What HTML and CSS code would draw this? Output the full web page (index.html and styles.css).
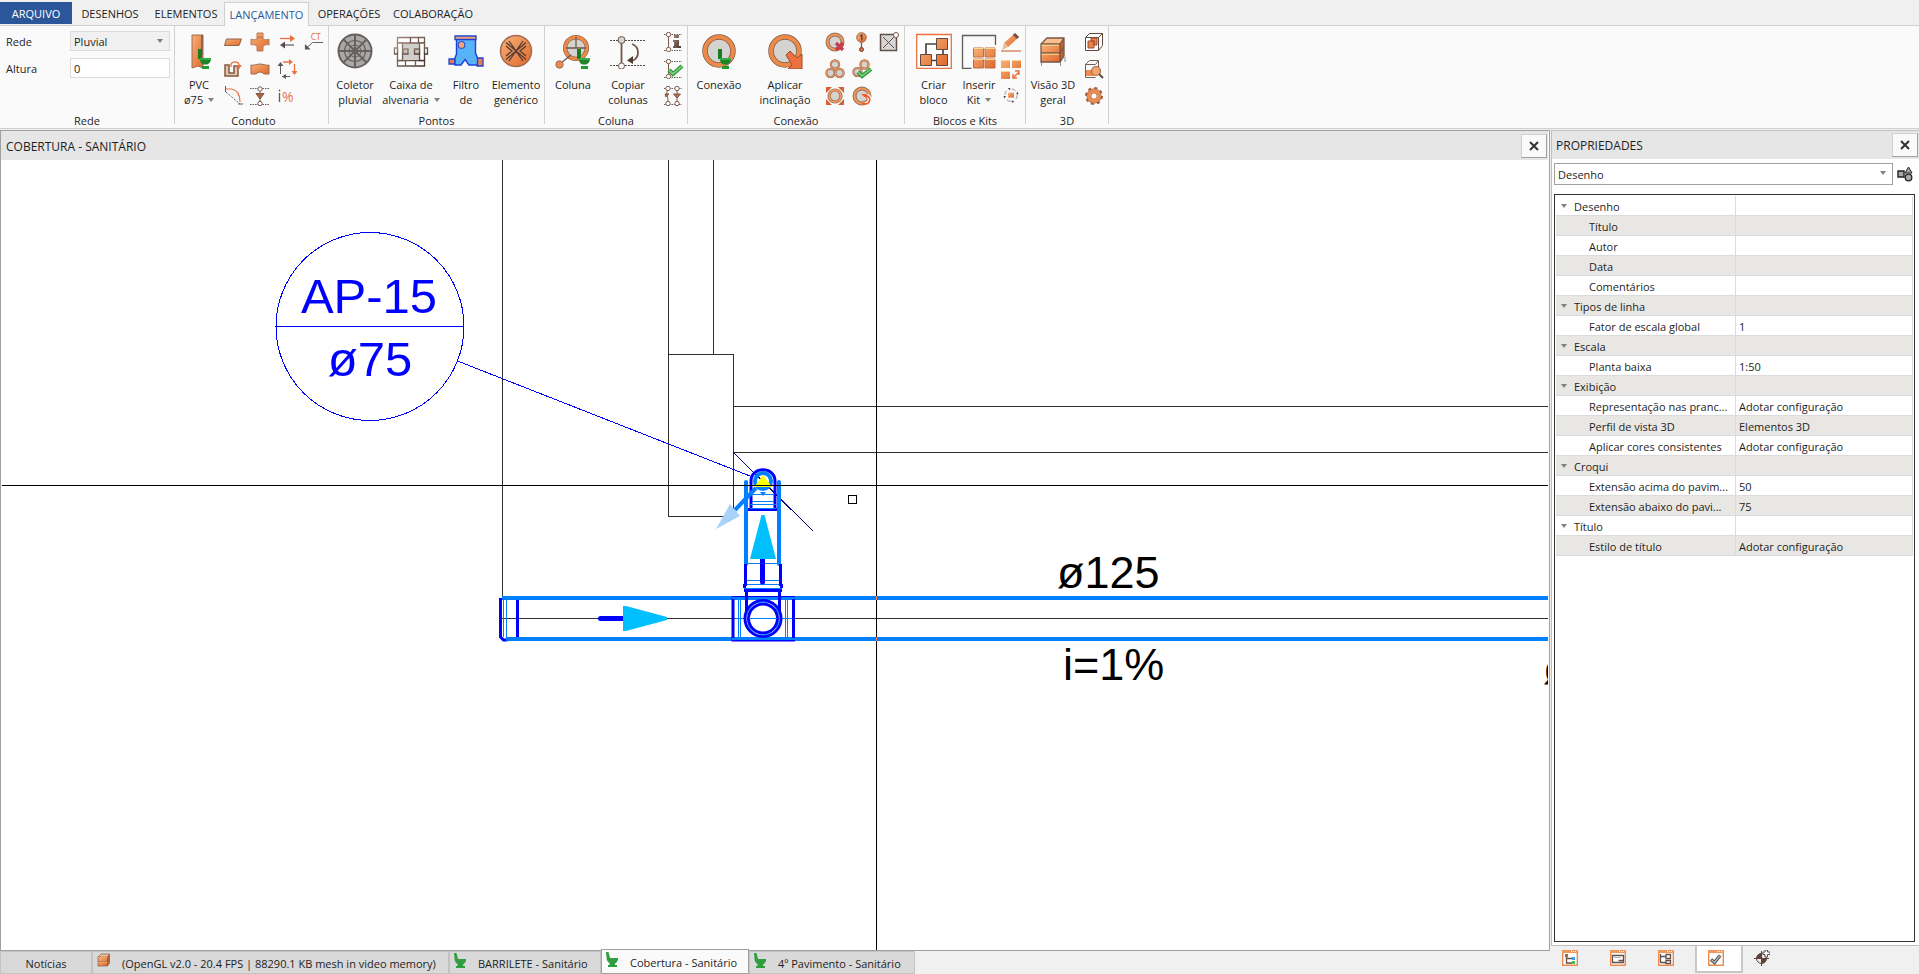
FILE: index.html
```html
<!DOCTYPE html>
<html lang="pt-BR">
<head>
<meta charset="utf-8">
<title>Cobertura - Sanitário</title>
<link rel="stylesheet" href="styles.css">
</head>
<body>
<svg class="defs" width="0" height="0" aria-hidden="true">
  <defs>
    <linearGradient id="org" x1="0" y1="0" x2="1" y2="1"><stop offset="0" stop-color="#f8b27a"/><stop offset="1" stop-color="#e0672a"/></linearGradient>
    <linearGradient id="brn" x1="0" y1="0" x2="1" y2="1"><stop offset="0" stop-color="#a08878"/><stop offset="1" stop-color="#4a3530"/></linearGradient>
    <symbol id="toilet" viewBox="0 0 14 20"><path d="M1 0h4v10H1z" fill="#1b7a22"/><path d="M2.500 9H14c0 4-2 6-4 6.500H6C4 14.500 3 12.500 2.500 9z" fill="#1f8428"/><path d="M3 9h11v2H3z" fill="#2fae45"/><path d="M5 17h7v3H5z" fill="#1f9a30"/></symbol>
    <symbol id="seat" viewBox="0 0 12 15"><path d="M0 0h2.500l1.500 6h8v2c-1 2-2 3-3 3.500V13h2v2H2v-2h1.500v-2C1.500 10 .5 8 .5 5z" fill="#2f9e3f"/></symbol>
    <symbol id="ring" viewBox="0 0 36 36"><circle cx="18" cy="18" r="14" fill="#d5d3d0" stroke="#7d5a48" stroke-width="5.500"/><circle cx="18" cy="18" r="14" fill="none" stroke="#ee8a48" stroke-width="4"/></symbol>
    <symbol id="sring" viewBox="0 0 20 20"><circle cx="10" cy="10" r="7.500" fill="#d5d3d0" stroke="#94705c" stroke-width="4"/><circle cx="10" cy="10" r="7.500" fill="none" stroke="#f0955a" stroke-width="2.200"/></symbol>
    <symbol id="cube" viewBox="0 0 28 30"><path d="M2 8l6-6h17l-4 6z" fill="#f9c08c"/><path d="M2 8h19v18H2z" fill="url(#org)"/><path d="M21 8l4-6v18l-4 6z" fill="#c4622c"/><path d="M2 8l6-6h17v18l-4 6H2zM2 8h19v18M21 8l4-6M2 17h19l4-6" fill="none" stroke="#775548" stroke-width="1.300"/><path d="M2.500 9.200H20M2.500 18.200H20" stroke="#f8e08c"/></symbol>
  </defs>
</svg>

<div class="app">
  <nav class="menu" aria-label="Menu principal">
    <button class="tab file">ARQUIVO</button>
    <button class="tab">DESENHOS</button>
    <button class="tab">ELEMENTOS</button>
    <button class="tab current">LANÇAMENTO</button>
    <button class="tab">OPERAÇÕES</button>
    <button class="tab">COLABORAÇÃO</button>
  </nav>

  <section class="ribbon" aria-label="Lançamento">
    <div class="group g-rede">
      <div class="fields">
        <label for="rede">Rede</label>
        <div class="combo"><select id="rede"><option>Pluvial</option></select></div>
        <label for="altura">Altura</label>
        <input id="altura" type="text" value="0">
      </div>
      <h2>Rede</h2>
    </div>

    <div class="group g-conduto">
      <div class="tools">
        <button class="big w40"><svg viewBox="0 0 36 36"><path d="M11 2h11v33l-5-2-6 2z" fill="url(#org)" stroke="#9c6a50"/><path d="M20 2h2v20l-2-1z" fill="#8d6552"/><use href="#toilet" x="15" y="16" width="16" height="20"/></svg><span>PVC<br>ø75 <i class="caret"></i></span></button>
        <div class="small c4">
          <button aria-label="Conduto"><svg viewBox="0 0 20 20"><path d="M3.500 7h15l-2.500 6.500H1.500z" fill="url(#org)" stroke="#8a6350"/></svg></button>
          <button aria-label="Cruzamento"><svg viewBox="0 0 20 20"><path d="M7 1h6v6c2 1 4 1 6 0v6c-2-1-4 0-6 1v5H7v-5c-2-1-4-2-6-1V7c2 1 4 1 6 0z" fill="url(#org)" stroke="#b87a58"/><path d="M7 6.500Q10 3 13 6.500" fill="none" stroke="#9c6a50"/></svg></button>
          <button aria-label="Inverter sentido"><svg viewBox="0 0 20 20"><path d="M5 13h12" stroke="#605a58" stroke-width="1.200"/><path d="M3 6.500h12" stroke="#ec7040" stroke-width="1.300"/><path d="M13 3l5 3.500-5 3.500z" fill="#ec7040"/><path d="M8 9.500v7L3 13z" fill="#5c4c48"/></svg></button>
          <button aria-label="Chamada de texto"><svg viewBox="-1 0 21 20"><path d="M19 10.500H8L1 17" fill="none" stroke="#605a58"/><path d="M0 12v6h6z" fill="#5c5552"/><text x="6" y="8" class="ct">CT</text></svg></button>
          <button aria-label="Desviar"><svg viewBox="0 0 20 20"><path d="M2 6h4v8h5V7h4v10H2z" fill="#ecc6aa" stroke="#7e5a49" stroke-width="1.500"/><path d="M8 8V5.500C9 2 15 2 16 5.500V8" fill="none" stroke="#ec7040" stroke-width="1.300"/><path d="M13 6h6l-3 4z" fill="#ec7040"/></svg></button>
          <button aria-label="Curva"><svg viewBox="0 0 20 20"><path d="M1 6c3 1 5-1 9-1s6 2 9 1v9h-5q-4-4-8 0H1z" fill="url(#org)" stroke="#9c6a50"/></svg></button>
          <button aria-label="Girar"><svg viewBox="0 0 20 20"><path d="M3.500 4v11M5 17.500h8" stroke="#605a58"/><path d="M0.500 7L3.500 3l3 4zM9 15v5l-4-2.500z" fill="#5c5552"/><path d="M6 3h7M17.500 5v9" stroke="#ec7040" stroke-width="1.300"/><path d="M12 0l4 3-4 3zM14.500 12h6l-3 4z" fill="#ec7040"/></svg></button>
          <button aria-label="Arco"><svg viewBox="0 0 20 20"><path d="M2.500 3h6C14 4 17 9 17 16" fill="none" stroke="#ec7040" stroke-width="1.200"/><path d="M2.500 0v6M15 18h5" stroke="#605a58"/><path d="M3 6l14 12" stroke="#605a58" stroke-dasharray="2 1.500"/></svg></button>
          <button aria-label="Desnível"><svg viewBox="0 0 20 20"><path d="M0 2.500h20M0 18.500h20" stroke="#605a58" stroke-dasharray="1.500 1"/><path d="M10 3v15" stroke="#7c5a4a"/><circle cx="10" cy="3" r="2.200" fill="#fff" stroke="#7c5a4a"/><circle cx="10" cy="17.500" r="2.200" fill="#fff" stroke="#7c5a4a"/><path d="M6 7.500h8L10 13z" fill="#b0623c" stroke="#7c5a4a"/></svg></button>
          <button aria-label="Inclinação"><svg viewBox="0 0 20 20"><path d="M2.500 7v9M2.500 3.500v2" stroke="#605a58" stroke-width="1.300"/><text x="5" y="16" class="pct">%</text></svg></button>
        </div>
      </div>
      <h2>Conduto</h2>
    </div>

    <div class="group g-pontos">
      <div class="tools">
        <button class="big w52"><svg viewBox="0 0 36 36"><circle cx="18" cy="18" r="16.500" fill="#aaa7a4" stroke="#66615f" stroke-width="2"/><g fill="none" stroke="#66615f"><circle cx="18" cy="18" r="10.500" stroke-width="1.200"/><circle cx="18" cy="18" r="6"/><path d="M18 2v32M2 18h32M6.500 6.500l23 23M29.500 6.500l-23 23" stroke-width="2"/></g></svg><span>Coletor<br>pluvial</span></button>
        <button class="big w60"><svg viewBox="0 0 36 36"><path d="M9 10h18v16H9z" fill="#d0cecc"/><g fill="#fff" stroke="url(#brn)" stroke-width="1.300"><path d="M4.500 4.500h27v5.500h-27zM4.500 27.500h27V33h-27z"/><path d="M4.500 10h5v17.500h-5zM26.500 10h5v17.500h-5z"/><path d="M1.500 15h3v6h-3zM31.500 15h3v6h-3z"/><path d="M10 16h5v5h-5zM21.500 16h5v5h-5z" fill="#c5c2bf"/></g><path d="M17.500 4.500V10M25.500 4.500V10M12.500 27.500V33M22.500 27.500V33" stroke="#705549" stroke-width="1.300"/></svg><span>Caixa de<br>alvenaria <i class="caret"></i></span></button>
        <button class="big w50"><svg viewBox="0 0 36 36"><path d="M1 26h6v5H1zM29 25h6v8h-6z" fill="#ec7f45" stroke="#1f41d8" stroke-width="1.300"/><path d="M8.500 6h19v14l2 5v7H21l-4-5.500L13 32H7v-7l1.500-4z" fill="#58b2f8" stroke="#1f41d8" stroke-width="1.400"/><path d="M7 3h21v3.500H7z" fill="#f3a46f" stroke="#1f41d8" stroke-width="1.300"/><circle cx="13.500" cy="12" r="3.500" fill="#f3a46f" stroke="#1f41d8"/><path d="M11 19v1M16 22v1M21 12v1M24 18v1M18 17v1M12 25v1M22 25v1" stroke="#2fe0e8"/></svg><span>Filtro<br>de</span></button>
        <button class="big w50"><svg viewBox="0 0 36 36"><circle cx="18" cy="18" r="15.500" fill="url(#org)" stroke="#a06b50" stroke-width="1.500"/><path d="M8 9.500L18 18l10-8.500M8 26.500L18 18l10 8.500M8 13l6 5-6 5M28 13l-6 5 6 5M11 8l14 20M25 8L11 28" fill="none" stroke="#503c34" stroke-width="1.300"/></svg><span>Elemento<br>genérico</span></button>
      </div>
      <h2>Pontos</h2>
    </div>

    <div class="group g-coluna">
      <div class="tools">
        <button class="big w56"><svg viewBox="0 0 36 36"><use href="#ring" x="7" y="1" width="28" height="28"/><path d="M11 15h20M21 4v11M16 22L6 30" stroke="#705549" stroke-width="1.300"/><circle cx="4.500" cy="31.500" r="3.700" fill="#ee8a48" stroke="#94705c"/><use href="#toilet" x="20" y="16" width="16" height="20"/></svg><span>Coluna</span></button>
        <button class="big w54"><svg viewBox="0 0 36 36"><path d="M0 7.500h36M0 32.500h36" stroke="#504a48" stroke-dasharray="2 1"/><path d="M11.500 8v24" stroke="#705549" stroke-width="1.800"/><circle cx="11.500" cy="7" r="3.500" fill="#d5d3d0" stroke="#705549"/><circle cx="11.500" cy="33" r="3" fill="#fff" stroke="#705549"/><path d="M22 11c8 3 8 14 0 17" fill="none" stroke="#705549" stroke-width="1.800"/><path d="M23 23v8l-6-3.500z" fill="#503c34"/></svg><span>Copiar<br>colunas</span></button>
        <div class="small gap5">
          <button aria-label="Informações da coluna"><svg viewBox="0 0 20 20"><path d="M0 2.500h18M0 18.500h18" stroke="#605a58" stroke-dasharray="1.500 1"/><path d="M4.500 3v15" stroke="#7c5a4a"/><circle cx="4.500" cy="2.500" r="2.200" fill="#fff" stroke="#7c5a4a"/><circle cx="4.500" cy="17.500" r="2.200" fill="#fff" stroke="#7c5a4a"/><path d="M10 3h5v3h-5zM9 8h6v6h2v2H9v-2h1v-4H9z" fill="url(#brn)"/></svg></button>
          <button aria-label="Verificar coluna"><svg viewBox="0 0 20 20"><path d="M0 2.500h18M0 18.500h18" stroke="#605a58" stroke-dasharray="1.500 1"/><path d="M4.500 3v15" stroke="#7c5a4a"/><circle cx="4.500" cy="2.500" r="2.200" fill="#fff" stroke="#7c5a4a"/><circle cx="4.500" cy="17.500" r="2.200" fill="#fff" stroke="#7c5a4a"/><path d="M5 11l4 4 9-8" fill="none" stroke="#2c8a34" stroke-width="4"/><path d="M5 11l4 4 9-8" fill="none" stroke="#6ed072" stroke-width="2"/></svg></button>
          <button aria-label="Desnível de colunas"><svg viewBox="0 0 20 20"><path d="M0 2.500h18M0 18.500h18" stroke="#605a58" stroke-dasharray="1.500 1"/><path d="M4 3C1 8 5 12 4 18M13 3v15" fill="none" stroke="#7c5a4a"/><g fill="#fff" stroke="#7c5a4a"><circle cx="4" cy="2.500" r="2.200"/><circle cx="4" cy="17.500" r="2.200"/><circle cx="13" cy="2.500" r="2.200"/><circle cx="13" cy="17.500" r="2.200"/></g><path d="M9.500 8h7L13 12zM1 8h4l-3 3z" fill="#c0683e" stroke="#7c5a4a"/></svg></button>
        </div>
      </div>
      <h2>Coluna</h2>
    </div>

    <div class="group g-conexao">
      <div class="tools">
        <button class="big w62"><svg viewBox="0 0 36 36"><use href="#ring" width="36" height="36"/><use href="#toilet" x="15" y="16" width="16" height="20"/></svg><span>Conexão</span></button>
        <button class="big w70"><svg viewBox="0 0 36 36"><use href="#ring" width="36" height="36"/><path d="M19 22l4-4 7 7 5-4v15H21l4-4z" fill="#ee7040" stroke="#94502c"/></svg><span>Aplicar<br>inclinação</span></button>
        <div class="small c3 gap1">
          <button aria-label="Excluir conexão"><svg viewBox="0 0 20 20"><use href="#sring" width="20" height="20"/><path d="M11 11l7 7M18 11l-7 7" stroke="#c83c50" stroke-width="3.200"/></svg></button>
          <button aria-label="Numerar"><svg viewBox="0 0 20 20"><path d="M9.500 9v8" stroke="#705549" stroke-width="1.200"/><circle cx="9.500" cy="5.500" r="4.800" fill="url(#org)" stroke="#a06b50"/><circle cx="9.500" cy="17.500" r="2" fill="#d8703c" stroke="#704030"/><path d="M8 4l1.800-1v5.500" fill="none" stroke="#503c34" stroke-width="1.300"/></svg></button>
          <button aria-label="Caixa"><svg viewBox="0 0 20 20"><path d="M1.500 2.500h16v16h-16z" fill="#d8d6d4" stroke="#605048" stroke-width="1.500"/><path d="M4 5l11 11M15 5L4 16" stroke="#605048"/><circle cx="17" cy="3" r="2.500" fill="#fff" stroke="#7c5a4a"/></svg></button>
          <button aria-label="Grupo de conexões"><svg viewBox="0 0 20 20"><use href="#sring" x="4.500" y="0" width="11" height="11"/><use href="#sring" x="0" y="8.500" width="11" height="11"/><use href="#sring" x="9" y="8.500" width="11" height="11"/></svg></button>
          <button aria-label="Verificar conexões"><svg viewBox="0 0 20 20"><use href="#sring" x="7" y="0" width="11" height="11"/><use href="#sring" x="0" y="7.500" width="11" height="11"/><path d="M6 13l4 4 9-7" fill="none" stroke="#2c8a34" stroke-width="4"/><path d="M6 13l4 4 9-7" fill="none" stroke="#6ed072" stroke-width="2"/></svg></button>
          <i></i>
          <button aria-label="Ajustar conexão"><svg viewBox="0 0 20 20"><path d="M1 1h6L1 7zM19 1v6l-6-6zM1 19v-6l6 6zM19 19h-6l6-6z" fill="#d8602c"/><use href="#sring" x="2" y="2" width="16" height="16"/></svg></button>
          <button aria-label="Atualizar conexão"><svg viewBox="0 0 20 20"><use href="#sring" width="20" height="20"/><path d="M12 10c7-2 8 8 1 8" fill="none" stroke="#fff" stroke-width="4"/><path d="M12 10c7-2 8 8 1 8h-3" fill="none" stroke="#ec6030" stroke-width="1.800"/><path d="M9 8h6v5z" fill="#ec6030"/></svg></button>
        </div>
      </div>
      <h2>Conexão</h2>
    </div>

    <div class="group g-blocos">
      <div class="tools">
        <button class="big w57"><svg viewBox="0 0 36 36"><path d="M.7 1.500h34.600v34H.7z" fill="#fff" stroke="#ec7040" stroke-width="1.300"/><path d="M10 22V11h12M15 27.500h8M27 14v10" fill="none" stroke="#504440" stroke-width="1.700"/><path d="M20.500 5.500h11v11h-11zM4.500 21.500h11v11h-11zM20.500 21.500h11v11h-11z" fill="url(#org)" stroke="#604a40"/></svg><span>Criar<br>bloco</span></button>
        <button class="big w34"><svg viewBox="0 0 36 36"><path d="M34.500 12V2.500h-33v33h9" fill="none" stroke="#605a58" stroke-width="1.300"/><path d="M12.500 15h10v9h-10zM24 15h10v9H24zM12.500 26h10v9h-10zM24 26h10v9H24z" fill="url(#org)" stroke="#c06c3c"/><path d="M12.500 15.500h10M24 15.500h10M12.500 26.500h10M24 26.500h10" stroke="#f8d898"/></svg><span>Inserir<br>Kit <i class="caret"></i></span></button>
        <div class="small gap1">
          <button aria-label="Editar bloco"><svg viewBox="0 0 20 20"><path d="M3 11L14 1l4 4L7 15z" fill="url(#org)"/><path d="M14 1l4 4-2 2-4-4z" fill="#705048"/><path d="M3 11l4 4-6 3z" fill="#e8c098"/><path d="M0 19h20" stroke="#d07040" stroke-width="1.200"/></svg></button>
          <button aria-label="Explodir bloco"><svg viewBox="0 0 20 20"><path d="M0 1h9v8H0zM11 1h9v8h-9zM0 12h9v8H0z" fill="url(#org)"/><path d="M0 1.500h9M11 1.500h9M0 12.500h9" stroke="#f8d898"/><path d="M12 19l6-6M18 16v-4h-4M12 15v4h4" fill="none" stroke="#ec7040" stroke-width="1.500"/></svg></button>
          <button aria-label="Girar bloco"><svg viewBox="-2 -1 24 24"><path d="M6.500 7h7v6h-7z" fill="url(#org)"/><circle cx="10" cy="10" r="7.500" fill="none" stroke="#8a8078" stroke-dasharray="5 6.780"/><path d="M6 2l3-1v3zM14 18l-3 1v-3zM2 14l-1-3h3zM18 6l1 3h-3z" fill="#504440"/></svg></button>
        </div>
      </div>
      <h2>Blocos e Kits</h2>
    </div>

    <div class="group g-3d">
      <div class="tools">
        <button class="big w54"><svg viewBox="0 0 36 36"><path d="M6.500 33v-4M25.500 33v-4M30 29v-5" stroke="#909090"/><use href="#cube" x="4" y="3" width="28" height="30"/></svg><span>Visão 3D<br>geral</span></button>
        <div class="small">
          <button aria-label="Vista 3D"><svg viewBox="0 0 20 20"><path d="M1.500 5.500l4-4h13v12l-4 5h-13zM1.500 5.500h13v13M14.500 5.500l4-4" fill="#fff" stroke="#604a40"/><path d="M4 9h6v7H4zM7 6h6v7h-3V9H7z" fill="#e88048" stroke="#9c5030"/></svg></button>
          <button aria-label="Localizar em 3D"><svg viewBox="0 0 20 20"><path d="M1.500 5.500l4-4h9v12M1.500 5.500h10M1.500 5.500v13h10M11.500 5.500l3-4" fill="none" stroke="#706058"/><path d="M2 11h8v6H2z" fill="#ec8a50"/><circle cx="12" cy="12" r="4.500" fill="#f3a46f" stroke="#a07050" stroke-width="1.200"/><path d="M15 15l4 4" stroke="#604a40" stroke-width="2"/></svg></button>
          <button aria-label="Configurações 3D"><svg viewBox="0 0 20 20"><circle cx="10" cy="10" r="7.500" fill="none" stroke="#a4623c" stroke-width="3" stroke-dasharray="3 2.890"/><circle cx="10" cy="10" r="5" fill="none" stroke="#84604c" stroke-width="5"/><circle cx="10" cy="10" r="5" fill="none" stroke="#ec8a50" stroke-width="4"/><circle cx="10" cy="10" r="2.500" fill="#fafafa"/></svg></button>
        </div>
      </div>
      <h2>3D</h2>
    </div>
  </section>

  <main class="work">
    <section class="document">
      <header class="titlebar"><h1>COBERTURA - SANITÁRIO</h1><button class="close" aria-label="Fechar desenho"><svg viewBox="0 0 10 10"><path d="M1 1l8 8M9 1L1 9" stroke="#333" stroke-width="2"/></svg></button></header>
      <svg class="canvas" role="img" aria-label="Planta da cobertura">
        <g transform="translate(-1 -160)" fill="none">
          <g stroke="#303030" shape-rendering="crispEdges">
            <path d="M502.500 160V598M713.500 160V354M668.500 160V516.500H733.500M668.500 354.500H733.500V516M733 406.500H4000M733 452.500H4000M502 618.500H4000"/>
          </g>
          <path d="M733 452l80 79" stroke="#000080" shape-rendering="crispEdges"/>
          <g stroke="#0000ff" shape-rendering="crispEdges">
            <circle cx="370" cy="326.500" r="94"/>
            <path d="M275 326.500H464M457.500 361L750 476"/>
          </g>
          <g class="tag" text-anchor="middle"><text x="369" y="313">AP-15</text><text x="370" y="376">ø75</text></g>
          <g class="note"><text x="1057" y="588">ø125</text><text x="1063" y="680">i=1%</text><text x="1543" y="684">ø</text></g>

          <path d="M500.500 598V637l3 3h4M517.500 600V637" stroke="#0000ff" stroke-width="3"/>
          <path d="M502 598H4000M506 639H4000" stroke="#0080ff" stroke-width="4"/>
          <path d="M503.500 600V637M506.500 600V637" stroke="#0080ff" shape-rendering="crispEdges"/>
          <path d="M600.500 618.500H625" stroke="#0000ff" stroke-width="5" stroke-linecap="round"/>
          <path d="M623 606h3l41 11v3l-41 11h-3z" fill="#00bfff"/>

          <path d="M733 597.500H793.500V640H733z" stroke="#0000ff" stroke-width="3"/>
          <path d="M732 598H795M732 639H795" stroke="#0080ff" stroke-width="2"/>
          <path d="M738.500 600V637M740.500 600V637M785.500 600V637M787.500 600V637M735 618.500H792" stroke="#0080ff" shape-rendering="crispEdges"/>
          <path d="M746.500 590V620M779.500 590V620" stroke="#0000ff" stroke-width="3"/>
          <circle cx="763" cy="618.500" r="18" fill="#fff" stroke="#0000ff" stroke-width="3"/>
          <circle cx="763" cy="618.500" r="14.500" stroke="#0000ff" stroke-width="3"/>
          <circle cx="763" cy="618.500" r="16.500" stroke="#0080ff" stroke-dasharray="10 8"/>
          <path d="M749 618.500H777" stroke="#0080ff" shape-rendering="crispEdges"/>

          <path d="M746 482V564M779 482V564" stroke="#0080ff" stroke-width="4" stroke-linecap="round"/>
          <path d="M745.500 564V586M780.500 564V586M744 590.500H782M744.500 584V588M781.500 584V588" stroke="#0000ff" stroke-width="3"/>
          <path d="M745 563.500H781M747 580.500H779M747 584.500H779M744 588.500H782" stroke="#0080ff" shape-rendering="crispEdges"/>
          <path d="M762.500 557V582" stroke="#0000ff" stroke-width="5" stroke-linecap="round"/>
          <path d="M761.500 515h3l11.500 44h-26z" fill="#00bfff"/>

          <path d="M751 510V481c0-15 24-15 24 0V510M748 509.500H777" stroke="#0000ff" stroke-width="3"/>
          <path d="M752 494.500H774M752 501.500H774M750 504.500H776M750 508.500H776" stroke="#0080ff" shape-rendering="crispEdges"/>
          <circle cx="763" cy="481" r="8" stroke="#0080ff" stroke-width="4"/>
          <path d="M760 492h6l-3 4z" fill="#0080ff"/>
          <path d="M756 488L735 510" stroke="#0080ff" stroke-width="4"/>
          <path d="M763 475l9 12h-18z" fill="#ffff00"/>
          <path d="M730 504l10 12-24 13z" fill="#a8d2f8"/>

          <path d="M848.500 495.500h8v8h-8z" stroke="#000" shape-rendering="crispEdges"/>
          <path d="M2 485.500H4000M876.500 160V3000" stroke="#000" shape-rendering="crispEdges"/>
          <path d="M876.500 596V600M876.500 637V641" stroke="#ff8040" shape-rendering="crispEdges"/>
        </g>
      </svg>
    </section>

    <nav class="views" aria-label="Janelas">
      <button class="view v1">Notícias</button>
      <button class="view v2"><svg class="i14" viewBox="0 0 28 30"><use href="#cube" width="28" height="30"/></svg><span>(OpenGL v2.0 - 20.4 FPS | 88290.1 KB mesh in video memory)</span></button>
      <button class="view v3"><svg class="i12"><use href="#seat"/></svg><span>BARRILETE - Sanitário</span></button>
      <button class="view v4 current"><svg class="i12"><use href="#seat"/></svg><span>Cobertura - Sanitário</span></button>
      <button class="view v5"><svg class="i12"><use href="#seat"/></svg><span>4º Pavimento - Sanitário</span></button>
    </nav>

    <aside class="props">
      <div class="panel">
        <header class="titlebar"><h1>PROPRIEDADES</h1><button class="close" aria-label="Fechar propriedades"><svg viewBox="0 0 10 10"><path d="M1 1l8 8M9 1L1 9" stroke="#333" stroke-width="2"/></svg></button></header>
        <div class="picker">
          <div class="combo"><select aria-label="Objeto"><option>Desenho</option></select></div>
          <button class="shapes" aria-label="Selecionar elementos"><svg viewBox="0 0 16 16"><path d="M1 5h6v6H1z" fill="#aaa" stroke="#222" stroke-width="1.400"/><path d="M11.500 1l3.500 6H8z" fill="#aaa" stroke="#222"/><circle cx="11.500" cy="11.500" r="3.300" fill="#aaa" stroke="#222" stroke-width="1.300"/></svg></button>
        </div>
        <div class="sheet">
          <table>
            <tr class="cat"><th scope="row">Desenho</th><td></td></tr>
            <tr><th scope="row">Título</th><td></td></tr>
            <tr><th scope="row">Autor</th><td></td></tr>
            <tr><th scope="row">Data</th><td></td></tr>
            <tr><th scope="row">Comentários</th><td></td></tr>
            <tr class="cat"><th scope="row">Tipos de linha</th><td></td></tr>
            <tr><th scope="row">Fator de escala global</th><td>1</td></tr>
            <tr class="cat"><th scope="row">Escala</th><td></td></tr>
            <tr><th scope="row">Planta baixa</th><td>1:50</td></tr>
            <tr class="cat"><th scope="row">Exibição</th><td></td></tr>
            <tr><th scope="row">Representação nas pranc...</th><td>Adotar configuração</td></tr>
            <tr><th scope="row">Perfil de vista 3D</th><td>Elementos 3D</td></tr>
            <tr><th scope="row">Aplicar cores consistentes</th><td>Adotar configuração</td></tr>
            <tr class="cat"><th scope="row">Croqui</th><td></td></tr>
            <tr><th scope="row">Extensão acima do pavim...</th><td>50</td></tr>
            <tr><th scope="row">Extensão abaixo do pavi...</th><td>75</td></tr>
            <tr class="cat"><th scope="row">Título</th><td></td></tr>
            <tr><th scope="row">Estilo de título</th><td>Adotar configuração</td></tr>
          </table>
        </div>
      </div>
      <nav class="docks" aria-label="Painéis">
        <button aria-label="Projeto"><svg viewBox="0 0 16 16"><path d="M.7.700h14.600v14.600H.7z" fill="#fff" stroke="#ec8a50" stroke-width="1.400"/><path d="M0 0h16v3H0z" fill="#f0985c"/><path d="M9 1.500h6" stroke="#fff" stroke-dasharray="1 1"/><path d="M4.500 5v8h7M4.500 8.500h7" fill="none" stroke="#605048" stroke-width="1.300"/><path d="M3 4h3v3H3z" fill="#9c6a58"/><path d="M10 7h3v3h-3z" fill="#38a0f0"/><path d="M10 11h3v3h-3z" fill="#40c850"/></svg></button>
        <button aria-label="Visualização"><svg viewBox="0 0 16 16"><path d="M.7.700h14.600v14.600H.7z" fill="#fff" stroke="#ec8a50" stroke-width="1.400"/><path d="M0 0h16v3H0z" fill="#f0985c"/><path d="M9 1.500h6" stroke="#fff" stroke-dasharray="1 1"/><path d="M2.500 5.500h11v7h-11zM8.500 10.500h5" fill="none" stroke="#605048" stroke-width="1.300"/><path d="M4 7.500h7" stroke="#bbb"/></svg></button>
        <button aria-label="Níveis"><svg viewBox="0 0 16 16"><path d="M.7.700h14.600v14.600H.7z" fill="#fff" stroke="#ec8a50" stroke-width="1.400"/><path d="M0 0h16v3H0z" fill="#f0985c"/><path d="M9 1.500h6" stroke="#fff" stroke-dasharray="1 1"/><path d="M2.500 4v9M2.500 6.500H8M2.500 12.500H8M8 4.500h4.500v4H8zM8 10.500h4.500v3H8z" fill="none" stroke="#605048" stroke-width="1.300"/></svg></button>
        <button class="current" aria-label="Propriedades"><svg viewBox="0 0 16 16"><path d="M.7.700h14.600v14.600H.7z" fill="#fff" stroke="#ec8a50" stroke-width="1.400"/><path d="M0 0h16v3H0z" fill="#f0985c"/><path d="M9 1.500h6" stroke="#fff" stroke-dasharray="1 1"/><path d="M3 9.500l3.500 3L12 5.500" fill="none" stroke="#555" stroke-width="3.500"/><path d="M3.500 10l3 2.500L11.500 6" fill="none" stroke="#b0aeac" stroke-width="1.500"/></svg></button>
        <button aria-label="Localizar"><svg viewBox="0 0 16 16"><circle cx="7.500" cy="8.500" r="5" fill="#f0e8e4" stroke="#604a40"/><path d="M7.500 3.500v5h-5a5 5 0 0 1 5-5zM7.500 13.500v-5h5a5 5 0 0 1-5 5z" fill="#604038"/><path d="M0 8.500h15M7.500 1v15" stroke="#604038"/><path d="M11 0h2.500v2H16v2.500h-2.500V7H11V4.500H9V2h2z" fill="#fff" stroke="#555"/></svg></button>
      </nav>
    </aside>
  </main>
</div>
</body>
</html>
```
FILE: styles.css
```css
* { box-sizing: border-box; }
body {
  margin: 0;
  background: #f0f0f0;
  color: #1e1e1e;
  font: 11px/15px "Open Sans", "Noto Sans", sans-serif;
}
button, input, select { font: inherit; color: inherit; }
button { border: 0; padding: 0; background: none; }
h1, h2 { margin: 0; font: inherit; }
.defs { position: absolute; }
.app { display: flex; flex-direction: column; height: 100vh; overflow: hidden; }

/* menu tabs */
.menu {
  display: grid;
  grid-template-columns: 72px 76px 76px 85px 80px 88px;
  height: 26px;
  padding-top: 2px;
  border-bottom: 1px solid #d0d0d0;
}
.tab { height: 22px; white-space: nowrap; }
.tab.file { background: #2b579a; color: #fff; }
.tab.current {
  height: 24px;
  background: #fafafa;
  border: 1px solid #d0d0d0;
  border-bottom: 0;
  color: #2b579a;
}

/* ribbon */
.ribbon {
  display: flex;
  height: 103px;
  flex: none;
  background: #fafafa;
  border-bottom: 1px solid #d0d0d0;
}
.group {
  display: flex;
  flex-direction: column;
  height: 98px;
  border-right: 1px solid #d0d0d0;
}
.group h2 { margin-top: auto; text-align: center; line-height: 6px; }
.g-rede { width: 175px; }
.g-conduto { width: 154px; padding-left: 4px; }
.g-pontos { width: 216px; }
.g-coluna { width: 143px; }
.g-conexao { width: 217px; }
.g-blocos { width: 121px; }
.g-3d { width: 83px; }
.fields {
  display: grid;
  grid-template-columns: 64px 100px;
  grid-auto-rows: 20px;
  row-gap: 7px;
  align-items: center;
  padding: 5px 0 0 6px;
}
.combo { position: relative; }
.combo::after, .caret {
  content: "";
  border: 3px solid transparent;
  border-top: 4px solid #808080;
  border-bottom: 0;
}
.combo::after { position: absolute; right: 7px; top: 8px; }
select, input { appearance: none; width: 100%; height: 20px; padding: 0 3px; border: 1px solid #dcdcdc; border-radius: 0; background: #fff; }
.combo select { display: block; }
.fields select { background: #f0f0f0; }
.tools { display: flex; }
.big { display: flex; flex-direction: column; align-items: center; padding-top: 7px; white-space: nowrap; }
.big svg { width: 36px; height: 36px; flex: none; }
.big span { margin-top: 8px; }
.caret { display: inline-block; vertical-align: 2px; margin-left: 2px; }
.w34 { width: 34px; }
.w40 { width: 40px; }
.w50 { width: 50px; }
.w52 { width: 52px; }
.w54 { width: 54px; }
.w56 { width: 56px; }
.w57 { width: 57px; }
.w60 { width: 60px; }
.w62 { width: 62px; }
.w70 { width: 70px; }
.small { display: grid; grid-template-columns: 27px; grid-auto-rows: 27px; padding-top: 2px; }
.small.c3 { grid-template-columns: repeat(3, 27px); }
.small.c4 { grid-template-columns: repeat(4, 27px); }
.c4 button:nth-child(5), .c4 button:nth-child(8) { grid-column: 1; }
.gap1 { margin-left: 1px; }
.gap5 { margin-left: 5px; }
.small button { display: grid; place-items: center; }
.small svg { width: 20px; height: 20px; }
.ct { font: 9px "Open Sans", sans-serif; fill: #ec7040; }
.pct { font: 14px "Open Sans", sans-serif; fill: #ec7040; }

/* work area */
.work {
  flex: 1;
  min-height: 0;
  display: grid;
  grid-template-columns: minmax(0, 1fr) 368px;
  grid-template-rows: minmax(0, 1fr) 24px;
  column-gap: 1px;
  padding-top: 1px;
}
.document {
  display: flex;
  flex-direction: column;
  min-height: 0;
  padding-right: 1px;
  background: #fff;
  border: 1px solid #a0a0a0;
  border-bottom: 0;
}
.titlebar {
  display: flex;
  align-items: center;
  justify-content: space-between;
  height: 29px;
  flex: none;
  padding: 0 1px 0 5px;
  background: #e6e6e6;
}
.titlebar h1 { font-size: 12px; }
.document h1 { padding-top: 2px; }
.close {
  display: grid;
  place-items: center;
  width: 26px;
  height: 24px;
  background: #fafafa;
  border: 1px solid #d0d0d0;
  border-right-color: #a0a0a0;
  border-bottom-color: #a0a0a0;
}
.close svg { width: 10px; height: 10px; }
.canvas { flex: 1; min-height: 0; width: 100%; display: block; overflow: hidden; }
.tag text { font: 49px "Liberation Sans", Arial, sans-serif; fill: #0000ff; }
.note text { font: 45px "Liberation Sans", Arial, sans-serif; fill: #000; }

/* window tabs */
.views { grid-row: 2; display: flex; align-items: flex-start; border-top: 1px solid #a0a0a0; }
.view {
  display: flex;
  align-items: center;
  height: 23px;
  background: #d9d9d9;
  border: 1px solid #c3c3c3;
  white-space: nowrap;
}
.view svg { flex: none; height: 15px; margin-bottom: 4px; }
.view span { padding-top: 2px; }
.i14 { width: 14px; }
.i12 { width: 12px; }
.v1 { width: 92px; padding-top: 2px; justify-content: center; }
.v2 { width: 357px; padding-left: 4px; gap: 11px; }
.v3 { width: 152px; padding-left: 4px; gap: 12px; }
.v4 { width: 148px; padding-left: 4px; gap: 12px; }
.v5 { width: 166px; padding-left: 4px; gap: 12px; }
.view.current { height: 25px; margin-top: -2px; background: #fafafa; border-color: #a0a0a0; }

/* properties */
.props { grid-column: 2; grid-row: 1 / 3; display: flex; flex-direction: column; min-height: 0; }
.panel {
  flex: 1;
  min-height: 0;
  display: flex;
  flex-direction: column;
  background: #fff;
  border: 1px solid #c0c0c0;
  border-right: 0;
}
.props .titlebar { height: 28px; padding-left: 4px; }
.picker { display: flex; gap: 4px; padding: 4px 6px 0 2px; }
.picker .combo { flex: 1; }
.picker select { height: 22px; border-color: #a0a0a0; }
.shapes { width: 16px; height: 22px; }
.shapes svg { width: 16px; height: 16px; display: block; margin: auto; }
.sheet { flex: 1; min-height: 0; margin: 9px 4px 3px 2px; padding: 1px; border: 1px solid #333; }
table { width: 100%; table-layout: fixed; border-collapse: separate; border-spacing: 0; }
tr { height: 20px; }
tr:nth-child(even) { background: #e8e7e3; }
th, td {
  height: 20px;
  padding: 2px 0 0 3px;
  border: solid #dcdcdc;
  border-width: 0 1px 1px 0;
  text-align: left;
  font-weight: 400;
  white-space: nowrap;
}
th { width: 180px; padding-left: 33px; }
.cat th { padding-left: 5px; }
.cat th::before {
  content: "";
  display: inline-block;
  margin-right: 7px;
  vertical-align: 3px;
  border: 3px solid transparent;
  border-top: 4px solid #808080;
  border-bottom: 0;
}
.docks { display: flex; height: 28px; flex: none; }
.docks button { display: flex; align-items: flex-start; width: 48px; height: 27px; padding: 4px 0 0 11px; }
.docks .current { background: #fff; border: solid #c8c8c8; border-width: 0 2px 2px; }
.docks svg { width: 16px; height: 16px; flex: none; }
```
